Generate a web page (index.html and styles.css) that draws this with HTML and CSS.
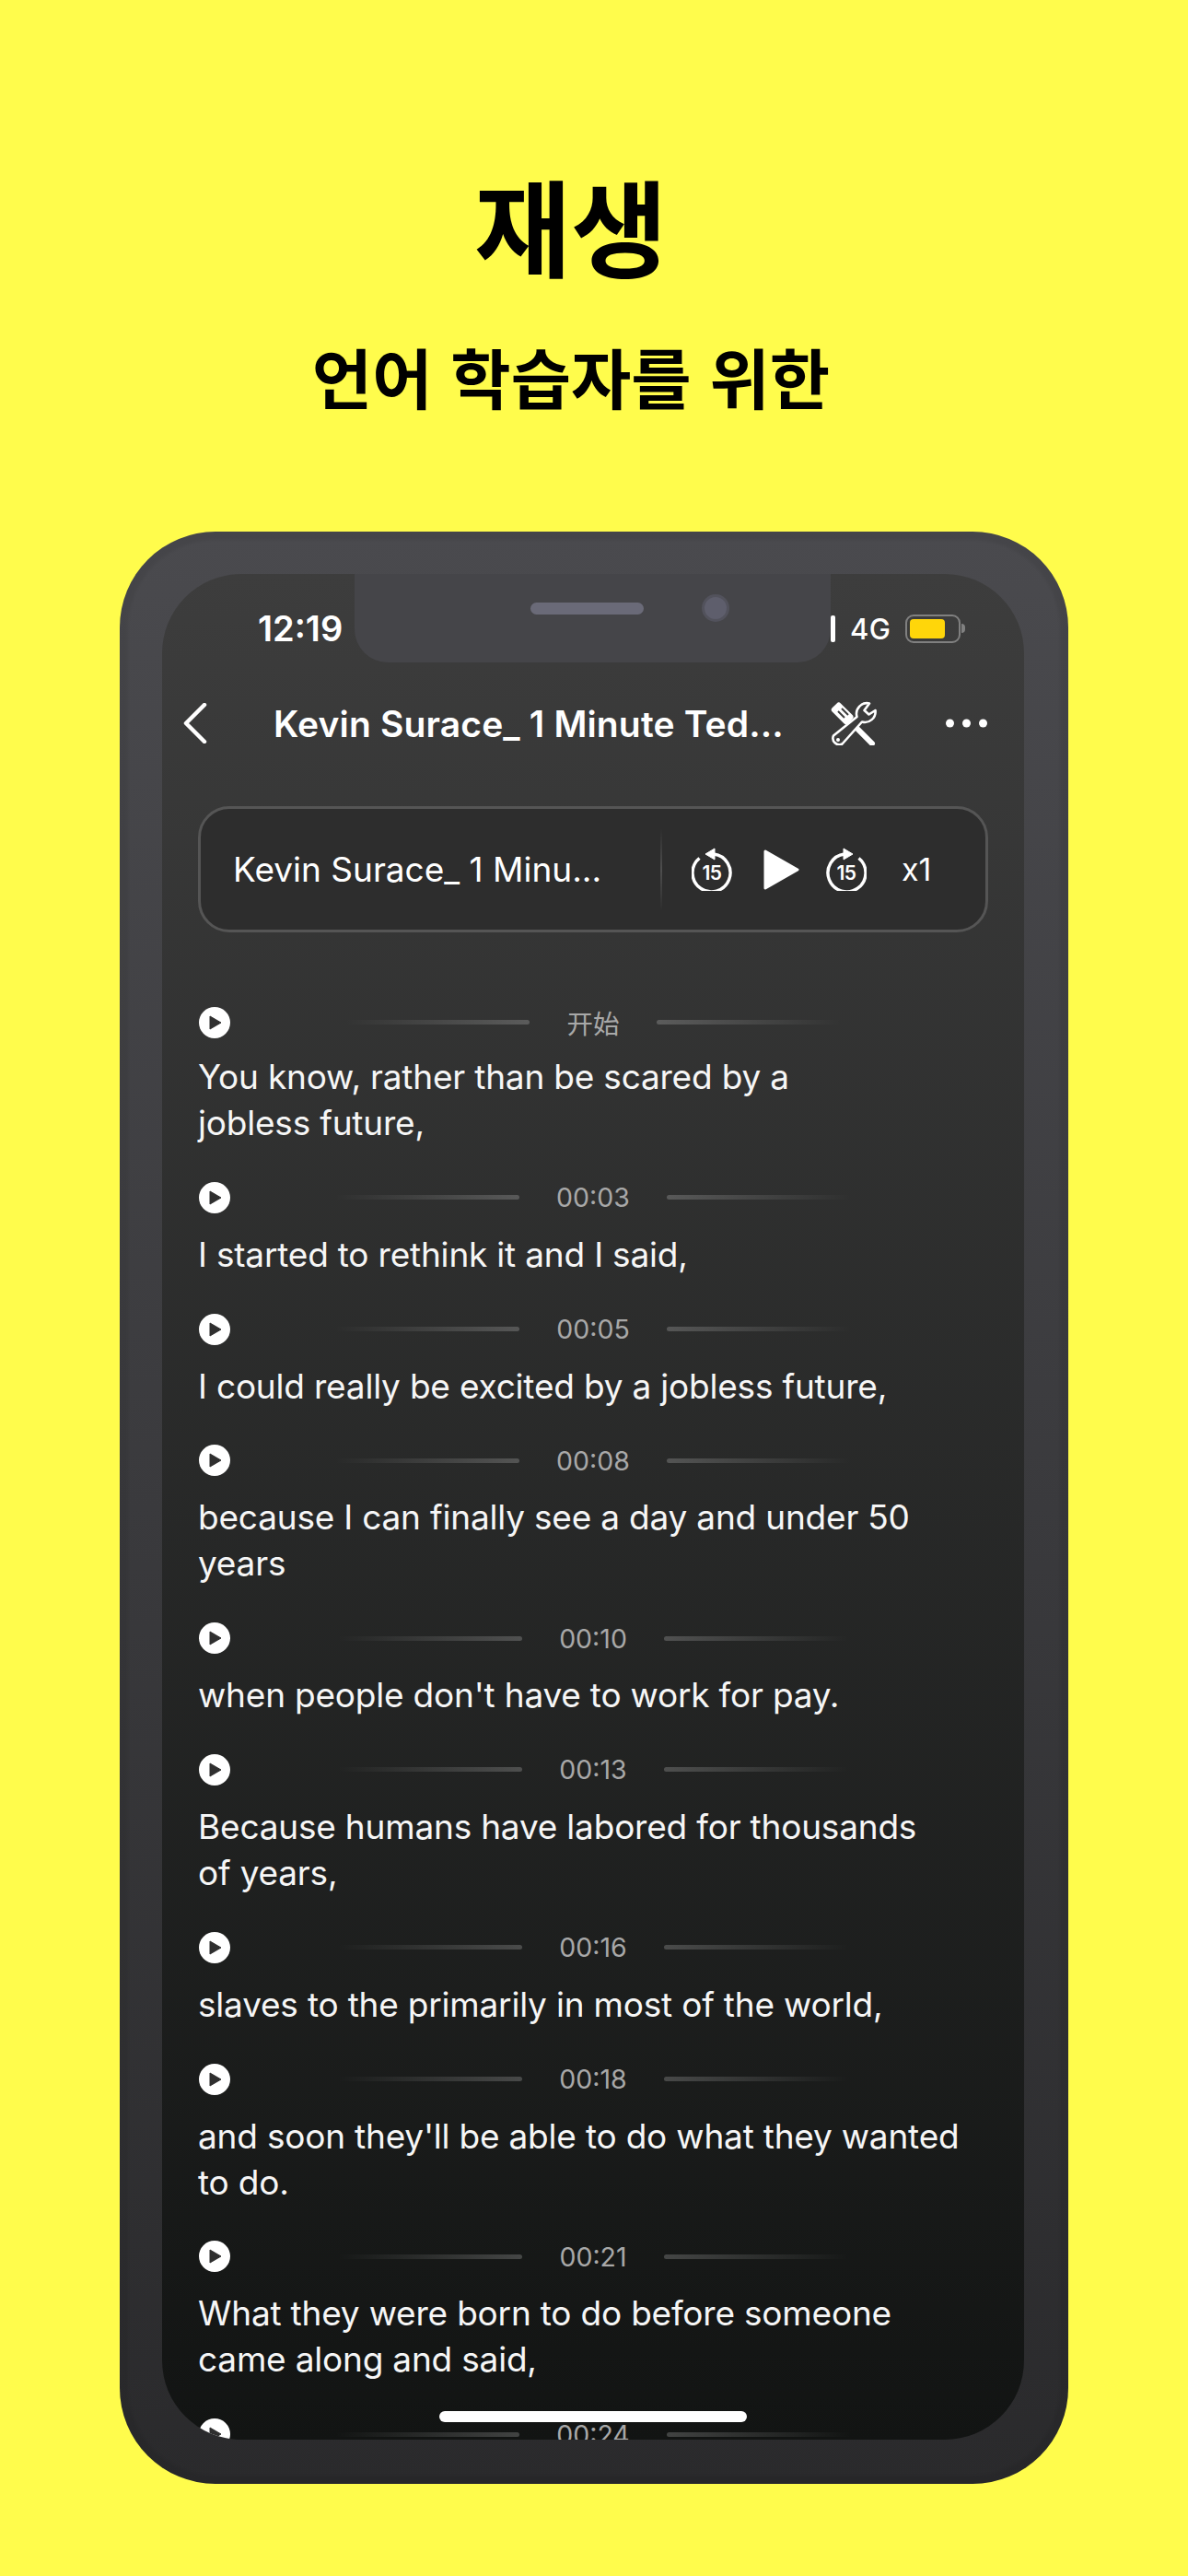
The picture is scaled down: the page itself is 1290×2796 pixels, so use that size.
FILE: index.html
```html
<!DOCTYPE html>
<html lang="ko">
<head>
<meta charset="utf-8">
<title>재생</title>
<link rel="stylesheet" href="styles.css">
</head>
<body>
<header class="hero">
  <h1 class="hero-title">재생</h1>
  <h2 class="hero-sub">언어 학습자를 위한</h2>
</header>
<main class="phone">
  <div class="screen">
    <div class="notch">
      <span class="speaker"></span>
      <span class="camera"></span>
    </div>
    <div class="status">
      <span class="clock">12:19</span>
      <div class="status-right">
        <span class="signal"></span>
        <span class="net">4G</span>
        <span class="battery"><span class="battery-fill"></span></span>
        <span class="battery-nub"></span>
      </div>
    </div>
    <nav class="nav">
      <svg class="back" viewBox="0 0 27 44"><path d="M24 2 L4 22 L24 42"/></svg>
      <div class="nav-title">Kevin Surace_ 1 Minute Ted...</div>
      <svg class="tools" viewBox="0 0 50 48">
        <path class="tool-solid" d="M17 19 L45 47"/>
        <path class="tool-solid thin" d="M30 31 L45 46"/>
        <rect class="tool-handle" x="1" y="7" width="24" height="13" rx="3" transform="rotate(45 13 13)"/>
        <path class="tool-slot" d="M8 11 L15 18 M12 8 L19 15"/>
        <path class="tool-line" d="M42 2.5 A11.5 11.5 0 0 0 28.5 17 L3 37.5 A7 7 0 0 0 12.5 46.5 L34 22.5 A11.5 11.5 0 0 0 48.5 10 L41.5 14.5 L36.5 10 Z"/>
        <circle class="tool-dot" cx="8" cy="42" r="2"/>
      </svg>
      <svg class="dots" viewBox="0 0 45 10"><circle cx="4.5" cy="5" r="4.5"/><circle cx="22.5" cy="5" r="4.5"/><circle cx="40.5" cy="5" r="4.5"/></svg>
    </nav>
    <section class="player">
      <div class="player-title">Kevin Surace_ 1 Minu...</div>
      <span class="player-divider"></span>
      <svg class="skip skip-back" viewBox="0 0 44 47">
        <path class="skip-arc" d="M24 7 A20.5 20.5 0 1 1 8.5 11.5"/>
        <path class="skip-head" d="M15 7 L25 1 L25 13 Z"/>
        <text class="skip-num" x="22" y="35">15</text>
      </svg>
      <svg class="big-play" viewBox="0 0 39 44"><path d="M2 2 L37 22 L2 42 Z"/></svg>
      <svg class="skip skip-fwd" viewBox="0 0 44 47">
        <path class="skip-arc" d="M20 7 A20.5 20.5 0 1 0 35.5 11.5"/>
        <path class="skip-head" d="M29 7 L19 1 L19 13 Z"/>
        <text class="skip-num" x="22" y="35">15</text>
      </svg>
      <span class="speed">x1</span>
    </section>
    <section class="list">
      <article class="row">
        <div class="row-head"><div class="head-left"><svg class="mini-play" viewBox="0 0 34 34"><circle cx="17" cy="17" r="17"/><path d="M12 10 L24 17 L12 24 Z"/></svg><span class="rule rule-l"></span></div><span class="time">开始</span><span class="rule rule-r"></span></div>
        <p class="line">You know, rather than be scared by a<br>jobless future,</p>
      </article>
      <article class="row">
        <div class="row-head"><div class="head-left"><svg class="mini-play" viewBox="0 0 34 34"><circle cx="17" cy="17" r="17"/><path d="M12 10 L24 17 L12 24 Z"/></svg><span class="rule rule-l"></span></div><span class="time">00:03</span><span class="rule rule-r"></span></div>
        <p class="line">I started to rethink it and I said,</p>
      </article>
      <article class="row">
        <div class="row-head"><div class="head-left"><svg class="mini-play" viewBox="0 0 34 34"><circle cx="17" cy="17" r="17"/><path d="M12 10 L24 17 L12 24 Z"/></svg><span class="rule rule-l"></span></div><span class="time">00:05</span><span class="rule rule-r"></span></div>
        <p class="line">I could really be excited by a jobless future,</p>
      </article>
      <article class="row">
        <div class="row-head"><div class="head-left"><svg class="mini-play" viewBox="0 0 34 34"><circle cx="17" cy="17" r="17"/><path d="M12 10 L24 17 L12 24 Z"/></svg><span class="rule rule-l"></span></div><span class="time">00:08</span><span class="rule rule-r"></span></div>
        <p class="line">because I can finally see a day and under 50<br>years</p>
      </article>
      <article class="row">
        <div class="row-head"><div class="head-left"><svg class="mini-play" viewBox="0 0 34 34"><circle cx="17" cy="17" r="17"/><path d="M12 10 L24 17 L12 24 Z"/></svg><span class="rule rule-l"></span></div><span class="time">00:10</span><span class="rule rule-r"></span></div>
        <p class="line">when people don't have to work for pay.</p>
      </article>
      <article class="row">
        <div class="row-head"><div class="head-left"><svg class="mini-play" viewBox="0 0 34 34"><circle cx="17" cy="17" r="17"/><path d="M12 10 L24 17 L12 24 Z"/></svg><span class="rule rule-l"></span></div><span class="time">00:13</span><span class="rule rule-r"></span></div>
        <p class="line">Because humans have labored for thousands<br>of years,</p>
      </article>
      <article class="row">
        <div class="row-head"><div class="head-left"><svg class="mini-play" viewBox="0 0 34 34"><circle cx="17" cy="17" r="17"/><path d="M12 10 L24 17 L12 24 Z"/></svg><span class="rule rule-l"></span></div><span class="time">00:16</span><span class="rule rule-r"></span></div>
        <p class="line">slaves to the primarily in most of the world,</p>
      </article>
      <article class="row">
        <div class="row-head"><div class="head-left"><svg class="mini-play" viewBox="0 0 34 34"><circle cx="17" cy="17" r="17"/><path d="M12 10 L24 17 L12 24 Z"/></svg><span class="rule rule-l"></span></div><span class="time">00:18</span><span class="rule rule-r"></span></div>
        <p class="line">and soon they'll be able to do what they wanted<br>to do.</p>
      </article>
      <article class="row">
        <div class="row-head"><div class="head-left"><svg class="mini-play" viewBox="0 0 34 34"><circle cx="17" cy="17" r="17"/><path d="M12 10 L24 17 L12 24 Z"/></svg><span class="rule rule-l"></span></div><span class="time">00:21</span><span class="rule rule-r"></span></div>
        <p class="line">What they were born to do before someone<br>came along and said,</p>
      </article>
      <article class="row">
        <div class="row-head"><div class="head-left"><svg class="mini-play" viewBox="0 0 34 34"><circle cx="17" cy="17" r="17"/><path d="M12 10 L24 17 L12 24 Z"/></svg><span class="rule rule-l"></span></div><span class="time">00:24</span><span class="rule rule-r"></span></div>
      </article>
    </section>
    <span class="home-bar"></span>
  </div>
</main>
</body>
</html>
```
FILE: styles.css
```css
* { box-sizing: border-box; }
html, body { margin: 0; padding: 0; }
body {
  width: 1290px;
  height: 2796px;
  overflow: hidden;
  background: #fffc4c;
  font-family: Inter, "Noto Sans", "Noto Sans CJK SC", sans-serif;
  color: #fff;
}
.hero {
  width: 1240px;
  height: 577px;
  padding-top: 178px;
  text-align: center;
  color: #000;
  font-family: "Noto Sans CJK KR", sans-serif;
}
.hero-title {
  margin: 0;
  font-size: 114px;
  line-height: 130px;
  font-weight: 700;
}
.hero-sub {
  margin: 57px 0 0;
  font-size: 71px;
  line-height: 84px;
  font-weight: 700;
}
.phone {
  width: 1030px;
  height: 2119px;
  margin-left: 130px;
  padding: 46px 48px 48px 46px;
  border-radius: 104px;
  background: linear-gradient(#4a4a4e, #2a2a2c);
  box-shadow: inset 0 0 3px 9px rgba(0, 0, 0, .06);
}
.screen {
  position: relative;
  height: 100%;
  overflow: hidden;
  border-radius: 86px;
  background: linear-gradient(#3d3d3d, #121413);
}
.notch {
  position: absolute;
  top: 0;
  left: 209px;
  width: 517px;
  height: 96px;
  border-radius: 0 0 36px 36px;
  background: #454549;
  z-index: 2;
}
.speaker {
  position: absolute;
  left: 191px;
  top: 31px;
  width: 123px;
  height: 13px;
  border-radius: 7px;
  background: #6a6a78;
}
.camera {
  position: absolute;
  left: 377px;
  top: 22px;
  width: 30px;
  height: 30px;
  border-radius: 50%;
  background: #5e5e6c;
  border: 3px solid #52525c;
}
.status {
  display: flex;
  align-items: center;
  justify-content: space-between;
  height: 118px;
  padding: 0 64px 0 104px;
}
.clock {
  font-size: 38px;
  font-weight: 600;
}
.status-right {
  display: flex;
  align-items: center;
}
.signal {
  width: 5px;
  height: 29px;
  margin-right: 16px;
  border-radius: 2px;
  background: #fff;
}
.net {
  width: 60px;
  font-size: 31px;
  font-weight: 500;
  letter-spacing: .4px;
}
.battery {
  display: block;
  width: 60px;
  height: 31px;
  padding: 3px;
  border: 2px solid #808080;
  border-radius: 9px;
}
.battery-fill {
  display: block;
  width: 38px;
  height: 100%;
  border-radius: 4px;
  background: #ffd60a;
}
.battery-nub {
  width: 4px;
  height: 10px;
  margin-left: 1px;
  border-radius: 0 4px 4px 0;
  background: #808080;
}
.nav {
  display: flex;
  align-items: center;
  height: 88px;
  padding-left: 22px;
}
.back {
  width: 27px;
  height: 44px;
  flex: none;
  fill: none;
  stroke: #fff;
  stroke-width: 4.5;
  stroke-linecap: round;
  stroke-linejoin: round;
}
.nav-title {
  width: 605px;
  flex: none;
  margin-left: 72px;
  font-size: 39px;
  font-weight: 600;
  letter-spacing: .15px;
  white-space: nowrap;
}
.tools {
  width: 50px;
  height: 48px;
  flex: none;
}
.tool-solid { fill: none; stroke: #fff; stroke-width: 3.5; stroke-linecap: round; }
.tool-solid.thin { stroke-width: 6; }
.tool-handle { fill: #fff; }
.tool-slot { fill: none; stroke: #3c3c3c; stroke-width: 2; }
.tool-line { fill: #3c3c3c; stroke: #fff; stroke-width: 2.6; stroke-linejoin: round; }
.tool-dot { fill: #fff; }
.dots {
  width: 45px;
  height: 10px;
  flex: none;
  margin-left: 75px;
  fill: #fff;
}
.player {
  display: flex;
  align-items: center;
  height: 137px;
  margin: 46px 39px 0;
  padding-left: 35px;
  border: 3px solid #555;
  border-radius: 34px;
  background: #2d2d2d;
}
.player-title {
  width: 464px;
  font-size: 37px;
  white-space: nowrap;
}
.player-divider {
  width: 2px;
  height: 90px;
  margin-right: 32px;
  background: linear-gradient(rgba(255,255,255,0), rgba(255,255,255,.16) 50%, rgba(255,255,255,0));
}
.skip {
  width: 44px;
  height: 47px;
  flex: none;
}
.skip-arc { fill: none; stroke: #fff; stroke-width: 3.4; }
.skip-head { fill: #fff; stroke: #fff; stroke-width: 1; stroke-linejoin: round; }
.skip-num {
  fill: #fff;
  font-family: Inter, sans-serif;
  font-size: 21px;
  font-weight: 600;
  text-anchor: middle;
  letter-spacing: -.5px;
}
.big-play {
  width: 39px;
  height: 44px;
  flex: none;
  margin: 0 29px 0 34px;
  fill: #fff;
  stroke: #fff;
  stroke-width: 3;
  stroke-linejoin: round;
}
.speed {
  margin-left: 38px;
  font-size: 34px;
}
.list {
  margin-top: 77px;
  padding: 0 40px 0 39px;
}
.row { margin-bottom: 37.8px; }
.row-head {
  display: grid;
  grid-template-columns: 1fr auto 1fr;
  column-gap: 40px;
  align-items: center;
  height: 36px;
  padding-left: 1px;
}
.head-left {
  display: flex;
  align-items: center;
  justify-content: space-between;
}
.mini-play {
  width: 34px;
  height: 34px;
  fill: #fff;
  flex: none;
}
.mini-play path {
  fill: #2f2f2f;
  stroke: #2f2f2f;
  stroke-width: 1;
  stroke-linejoin: round;
}
.rule {
  display: block;
  width: 200px;
  height: 5px;
  border-radius: 2.5px;
}
.rule-l { background: linear-gradient(to right, rgba(255,255,255,0), rgba(255,255,255,.2)); }
.rule-r { background: linear-gradient(to left, rgba(255,255,255,0), rgba(255,255,255,.2)); }
.time {
  font-size: 28.5px;
  color: #a8a8a8;
  font-family: Inter, "Noto Sans CJK SC", sans-serif;
}
.line {
  margin: 19px 0 0;
  font-size: 37px;
  line-height: 50px;
  letter-spacing: -.2px;
  color: #f6f6f6;
  white-space: nowrap;
}
.home-bar {
  position: absolute;
  left: 301px;
  bottom: 19px;
  width: 334px;
  height: 12px;
  border-radius: 6px;
  background: #fff;
  z-index: 2;
}
```
